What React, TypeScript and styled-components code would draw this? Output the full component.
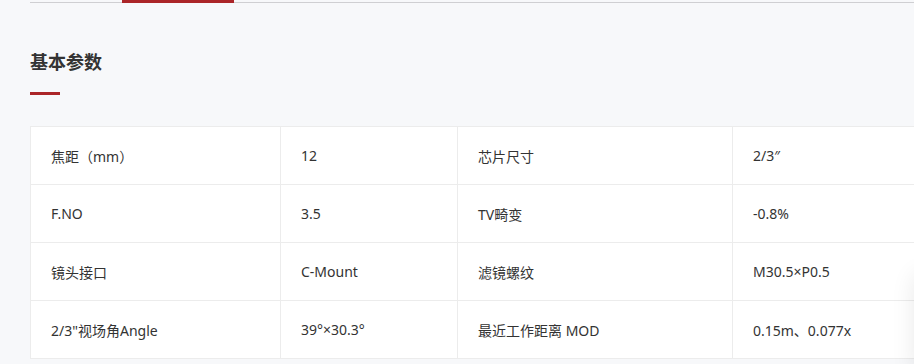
import styled, { createGlobalStyle } from "styled-components";

const GlobalStyle = createGlobalStyle`
  html, body {
    margin: 0;
    padding: 0;
    background: #f7f8fa;
    overflow: hidden;
  }
  body {
    font-family: "Noto Sans", "Noto Sans CJK SC", sans-serif;
    color: #333;
  }
`;

const Page = styled.div`
  width: 914px;
  height: 364px;
  position: relative;
  overflow: hidden;
`;

const TabBar = styled.div`
  display: flex;
  height: 2px;
  margin-left: 30px;
  border-bottom: 1px solid #cfcfd2;
`;

const ActiveTab = styled.div`
  margin-left: 92px;
  width: 112px;
  height: 3px;
  background: #ab2528;
`;

const Section = styled.section`
  padding: 0 30px;
`;

const Title = styled.h2`
  margin: 47px 0 0;
  font-size: 18px;
  line-height: 24px;
  font-weight: 700;
  color: #333;
`;

const TitleLine = styled.div`
  width: 30px;
  height: 3px;
  margin-top: 18px;
  background: #ab2528;
`;

const Table = styled.table`
  margin-top: 31px;
  width: 902px;
  table-layout: fixed;
  border-collapse: collapse;
  background: #fff;
  border: 1px solid #ececec;
`;

const Cell = styled.td`
  height: 58px;
  padding: 0 0 0 20px;
  border: 1px solid #ececec;
  font-size: 14px;
  color: #333;
  white-space: nowrap;
  box-sizing: border-box;
`;

const EdgeShadow = styled.div`
  position: absolute;
  right: -70px;
  bottom: -10px;
  width: 70px;
  height: 100px;
  border-radius: 8px;
  box-shadow: 0 0 24px rgba(0, 0, 0, 0.09);
`;

const rows = [
  ["焦距（mm）", "12", "芯片尺寸", "2/3″"],
  ["F.NO", "3.5", "TV畸变", "-0.8%"],
  ["镜头接口", "C-Mount", "滤镜螺纹", "M30.5×P0.5"],
  ['2/3"视场角Angle', "39°×30.3°", "最近工作距离 MOD", "0.15m、0.077x"],
];

const widths = [250, 177, 275, 200];

export default function App() {
  return (
    <Page>
      <GlobalStyle />
      <TabBar>
        <ActiveTab />
      </TabBar>
      <Section>
        <Title>基本参数</Title>
        <TitleLine />
        <Table>
          <colgroup>
            {widths.map((w, i) => (
              <col key={i} style={{ width: w }} />
            ))}
          </colgroup>
          <tbody>
            {rows.map((row) => (
              <tr key={row[0]}>
                {row.map((c, i) => (
                  <Cell key={i}>{c}</Cell>
                ))}
              </tr>
            ))}
          </tbody>
        </Table>
      </Section>
      <EdgeShadow />
    </Page>
  );
}
